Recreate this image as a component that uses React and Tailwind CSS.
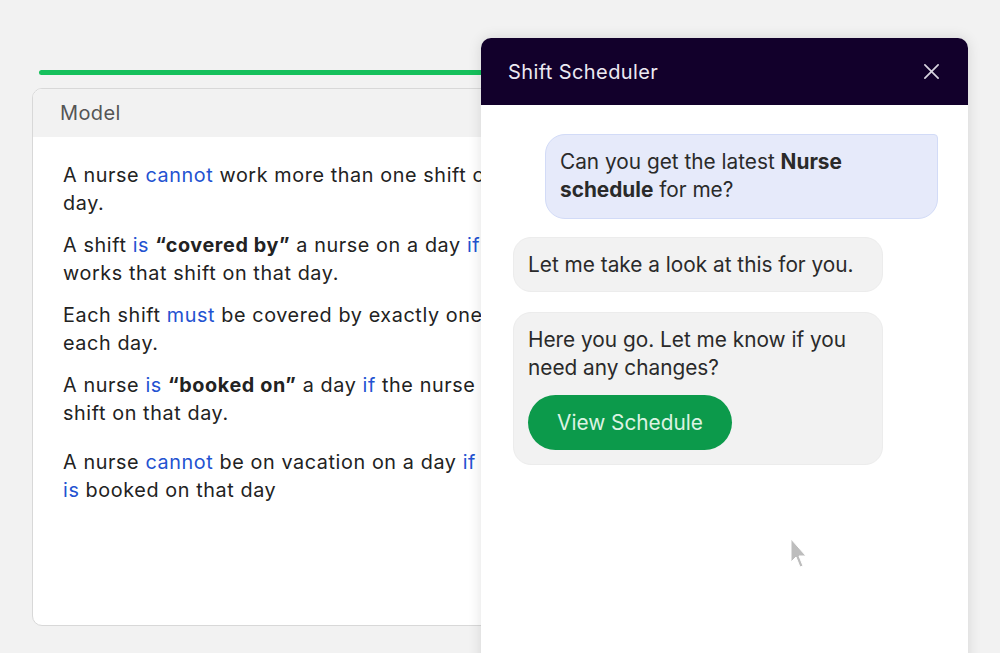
import React from "react";

const B = ({ children }) => <span className="text-[#2352d1]">{children}</span>;

export default function App() {
  return (
    <div className="relative w-[1000px] h-[653px] overflow-hidden bg-[#f2f2f2]" style={{ fontFamily: "Inter, 'Noto Sans', sans-serif" }}>
      <div className="pl-[32px] pt-[70px]">
        <div className="ml-[7px] h-[5px] w-[560px] rounded-full bg-[#16c05c]" />
        <div className="mt-[13px] w-[600px] h-[538px] rounded-[10px] border border-[#d8d8d8] bg-white overflow-hidden">
          <div className="h-[48px] bg-[#f2f2f2] flex items-center pl-[27px] text-[20px] tracking-[0.4px] text-[#555555]">Model</div>
          <div className="pl-[30px] pt-[24px] text-[19.8px] tracking-[0.6px] leading-[28px] text-[#222222] whitespace-nowrap">
            <p>A nurse <B>cannot</B> work more than one shift on a<br />day.</p>
            <p className="mt-[14px]">A shift <B>is</B> <b>“covered by”</b> a nurse on a day <B>if</B> the nurse<br />works that shift on that day.</p>
            <p className="mt-[14px]">Each shift <B>must</B> be covered by exactly one nurse<br />each day.</p>
            <p className="mt-[14px]">A nurse <B>is</B> <b>“booked on”</b> a day <B>if</B> the nurse works a<br />shift on that day.</p>
            <p className="mt-[21px]">A nurse <B>cannot</B> be on vacation on a day <B>if</B> the nurse<br /><B>is</B> booked on that day</p>
          </div>
        </div>
      </div>

      <div className="absolute left-[481px] top-[38px] w-[487px] h-[640px] bg-white rounded-t-[10px] shadow-[0_0_14px_rgba(0,0,0,0.12)] flex flex-col">
        <div className="h-[67px] shrink-0 rounded-t-[10px] bg-[#12002b] flex items-center justify-between pl-[27px] pr-[28px]">
          <span className="text-[20px] tracking-[0.4px] text-[#ece9f2]">Shift Scheduler</span>
          <svg width="17" height="17" viewBox="0 0 18 18" fill="none" stroke="#d8d4e0" strokeWidth="1.8" strokeLinecap="round">
            <path d="M2 2L16 16M16 2L2 16" />
          </svg>
        </div>
        <div className="flex flex-col pt-[29px] pl-[32px] pr-[30px] text-[20.8px] leading-[28px] text-[#2a2a2a]">
          <div className="self-end w-[393px] rounded-[20px] rounded-tr-[4px] bg-[#e6eafa] border border-[#d2dbf7] px-[14px] pt-[13px] pb-[14px]">
            Can you get the latest <b>Nurse<br />schedule</b> for me?
          </div>
          <div className="mt-[18px] w-[370px] rounded-[18px] bg-[#f2f2f2] border border-[#ececec] px-[14px] pt-[13px] pb-[12px]">
            Let me take a look at this for you.
          </div>
          <div className="mt-[20px] w-[370px] rounded-[18px] bg-[#f2f2f2] border border-[#ececec] px-[14px] pt-[13px] pb-[14px]">
            Here you go. Let me know if you<br />need any changes?
            <div className="mt-[13px] w-[204px] h-[55px] rounded-full bg-[#0c9a4b] flex items-center justify-center text-[20.8px] text-[#dcf3e3]">
              View Schedule
            </div>
          </div>
        </div>
      </div>

      <svg className="absolute left-[790px] top-[538px]" width="20" height="32" viewBox="0 0 20 32">
        <path d="M1 1 L1 24 L6 19 L10 29 L13 28 L9 18 L16 18 Z" fill="#bdbdbd" stroke="#ffffff" strokeWidth="1" />
      </svg>
    </div>
  );
}
